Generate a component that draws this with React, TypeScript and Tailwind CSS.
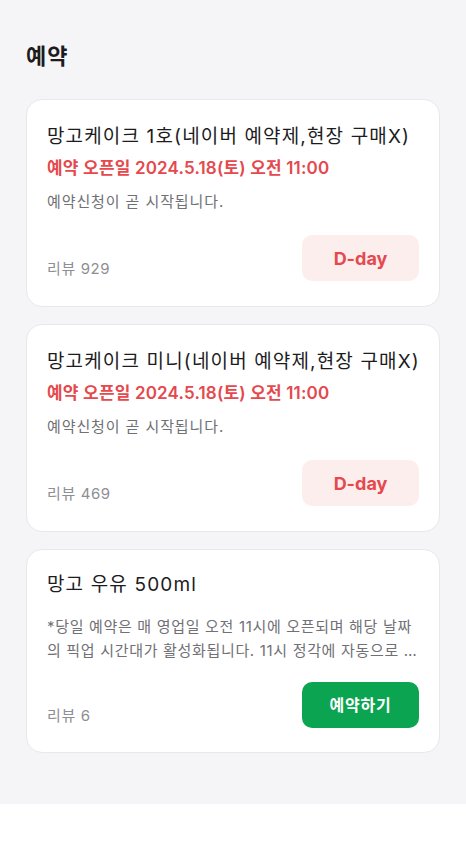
const items = [
  {
    title: '망고케이크 1호(네이버 예약제,현장 구매X)',
    open: '예약 오픈일 2024.5.18(토) 오전 11:00',
    desc: '예약신청이 곧 시작됩니다.',
    reviews: 929,
    action: 'dday',
  },
  {
    title: '망고케이크 미니(네이버 예약제,현장 구매X)',
    open: '예약 오픈일 2024.5.18(토) 오전 11:00',
    desc: '예약신청이 곧 시작됩니다.',
    reviews: 469,
    action: 'dday',
  },
  {
    title: '망고 우유 500ml',
    open: null,
    desc: '*당일 예약은 매 영업일 오전 11시에 오픈되며 해당 날짜의 픽업 시간대가 활성화됩니다. 11시 정각에 자동으로 오픈되니 참고해 주세요.',
    reviews: 6,
    action: 'reserve',
  },
];

export default function App() {
  return (
    <div className="bg-white min-h-[842px] font-['Inter','Noto_Sans_CJK_KR',sans-serif]">
      <div className="bg-[#f5f5f7] px-[26px] pt-[40px] pb-[51px]">
        <h1 className="text-[22px] leading-[32px] font-bold text-[#1c1c1e] tracking-[0.05em] mb-[27px]">예약</h1>

        <div className="flex flex-col gap-[17px]">
          {items.map((it) => (
            <div
              key={it.title}
              className={
                it.open
                  ? 'bg-white rounded-[16px] border border-[#e8e8ec] px-[20px] pt-[23px] pb-[25px]'
                  : 'bg-white rounded-[16px] border border-[#e8e8ec] px-[20px] pt-[21px] pb-[24px]'
              }
            >
              <div className="text-[19px] leading-[28px] text-[#1c1c1e] tracking-[0.06em] whitespace-nowrap">
                {it.title}
              </div>
              {it.open && (
                <div className="mt-[5px] text-[17px] leading-[24px] font-semibold text-[#e5484d] tracking-[0.01em]">
                  {it.open}
                </div>
              )}
              <p
                className={
                  it.open
                    ? 'mt-[11px] text-[15px] leading-[22px] text-[#707075] tracking-[0.06em]'
                    : 'mt-[16px] text-[15px] leading-[24px] text-[#707075] tracking-[0.045em] line-clamp-2'
                }
              >
                {it.desc}
              </p>

              <div
                className={
                  it.open
                    ? 'mt-[22px] flex items-end justify-between'
                    : 'mt-[19px] flex items-end justify-between'
                }
              >
                <span className="text-[15px] leading-[22px] text-[#8e8e93] tracking-[0.04em] pb-[1px]">
                  리뷰 {it.reviews}
                </span>
                {it.action === 'dday' ? (
                  <button className="w-[117px] h-[46px] rounded-[10px] bg-[#fdeeee] text-[#e5484d] text-[18px] font-bold">
                    D-day
                  </button>
                ) : (
                  <button className="w-[117px] h-[46px] rounded-[10px] bg-[#0ba451] text-white text-[16px] font-bold tracking-[0.05em]">
                    예약하기
                  </button>
                )}
              </div>
            </div>
          ))}
        </div>
      </div>
    </div>
  );
}
